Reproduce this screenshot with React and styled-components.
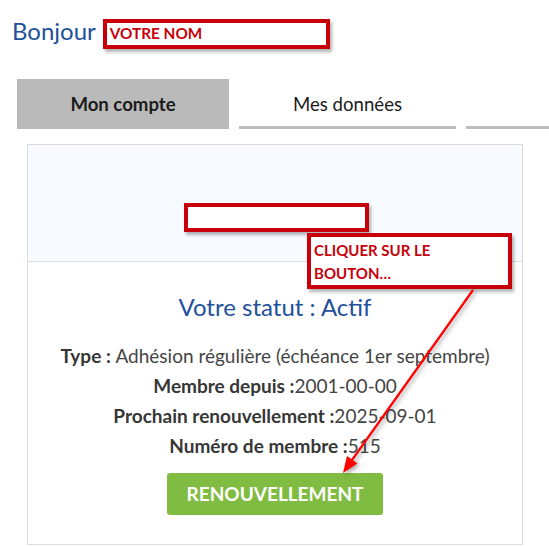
import React from 'react'
import styled, { createGlobalStyle } from 'styled-components'

const GlobalStyle = createGlobalStyle`
  html, body {
    margin: 0;
    padding: 0;
    background: #ffffff;
    overflow: hidden;
  }
  body {
    font-family: Lato, "Open Sans", Arial, sans-serif;
    color: #3d3d3d;
  }
`;

const Page = styled.div`
  position: relative;
  width: 549px;
  height: 546px;
  overflow: hidden;
  padding-top: 16px;
  box-sizing: border-box;
`;

const Greeting = styled.div`
  display: flex;
  align-items: flex-start;
  gap: 7px;
  height: 33px;
  padding-left: 12px;
`;

const Hello = styled.span`
  font-size: 24px;
  line-height: 30px;
  color: #22509a;
`;

const Annotation = styled.div`
  box-sizing: border-box;
  border: 4px solid #c8000a;
  background: #ffffff;
  box-shadow: 2px 3px 3px rgba(0, 0, 0, 0.3);
  color: #c8000a;
  font-family: Lato, "Open Sans", sans-serif;
  font-weight: 700;
  font-size: 15px;
  padding-left: 3px;
`;

const NameBox = styled(Annotation)`
  margin-top: 3px;
  width: 227px;
  height: 30px;
  line-height: 20px;
  font-size: 15.3px;
`;

const Tabs = styled.div`
  display: flex;
  gap: 10px;
  margin-top: 30px;
  padding-left: 17px;
`;

const Tab = styled.div`
  flex: none;
  box-sizing: border-box;
  width: ${p => p.width}px;
  height: 50px;
  display: flex;
  align-items: center;
  justify-content: center;
  font-size: 18.6px;
  color: #1b1b1b;
  font-weight: ${p => (p.active ? 700 : 400)};
  background: ${p => (p.active ? '#bababa' : 'transparent')};
  border-bottom: ${p => (p.active ? 'none' : '3px solid #bcbcbc')};
  padding-top: ${p => (p.active ? 0 : 3)}px;
`;

const Card = styled.div`
  position: relative;
  box-sizing: border-box;
  margin: 15px 0 0 27px;
  width: 496px;
  height: 401px;
  border: 1px solid #dcdcdc;
`;

const CardHeader = styled.div`
  height: 116px;
  background: #f7faff;
  border-bottom: 1px solid #dcdcdc;
`;

const CardBody = styled.div`
  display: flex;
  flex-direction: column;
  align-items: center;
  padding-top: 31px;
`;

const Status = styled.h2`
  margin: 0;
  font-size: 24px;
  font-weight: 400;
  line-height: 28.8px;
  color: #22509a;
`;

const Details = styled.div`
  margin-top: 19px;
  text-align: center;
  font-size: 19px;
  line-height: 30px;
  color: #444444;
`;

const Label = styled.b`
  font-weight: 700;
  color: #363636;
`;

const RenewButton = styled.button`
  margin-top: 12px;
  width: 216px;
  height: 42px;
  border: none;
  border-radius: 3px;
  background: #80bc41;
  color: #ffffff;
  font-family: Lato, "Open Sans", sans-serif;
  font-weight: 700;
  font-size: 19px;
  cursor: pointer;
`;

const EmptyBox = styled(Annotation)`
  position: absolute;
  left: 156px;
  top: 58px;
  width: 185px;
  height: 29px;
`;

const Callout = styled(Annotation)`
  position: absolute;
  left: 279px;
  top: 88px;
  width: 205px;
  height: 56px;
  line-height: 23px;
  padding-top: 2px;
`;

const ArrowLayer = styled.svg`
  position: absolute;
  left: 0;
  top: 0;
  pointer-events: none;
  filter: drop-shadow(2px 2px 2px rgba(0, 0, 0, 0.35));
`;

export default function App() {
  return (
    <Page>
      <GlobalStyle />
      <Greeting>
        <Hello>Bonjour</Hello>
        <NameBox>VOTRE NOM</NameBox>
      </Greeting>

      <Tabs>
        <Tab active width={212}>Mon compte</Tab>
        <Tab width={217}>Mes données</Tab>
        <Tab width={217}></Tab>
      </Tabs>

      <Card>
        <CardHeader />
        <CardBody>
          <Status>Votre statut : Actif</Status>
          <Details>
            <div><Label>Type : </Label>Adhésion régulière (échéance 1er septembre)</div>
            <div><Label>Membre depuis :</Label>2001-00-00</div>
            <div><Label>Prochain renouvellement :</Label>2025-09-01</div>
            <div><Label>Numéro de membre :</Label>515</div>
          </Details>
          <RenewButton>RENOUVELLEMENT</RenewButton>
        </CardBody>
        <EmptyBox />
        <Callout>CLIQUER SUR LE<br />BOUTON…</Callout>
      </Card>

      <ArrowLayer width="549" height="546" viewBox="0 0 549 546">
        <line x1="473" y1="290" x2="352" y2="460" stroke="#ff0000" strokeWidth="2.2" />
        <polygon points="343,473 357.5,463.5 347,456" fill="#ff0000" />
      </ArrowLayer>
    </Page>
  )
}
